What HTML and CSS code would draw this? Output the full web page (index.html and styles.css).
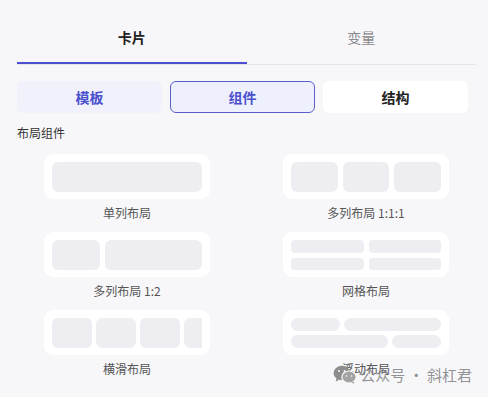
FILE: index.html
```html
<!DOCTYPE html>
<html lang="zh-CN">
<head>
  <meta charset="UTF-8">
  <meta name="viewport" content="width=device-width, initial-scale=1.0">
  <title>布局组件</title>
  <link rel="stylesheet" href="styles.css">
</head>
<body>
  <div class="panel">
    <div class="tabs">
      <div class="tab active">卡片</div>
      <div class="tab">变量</div>
    </div>

    <div class="segments">
      <div class="segment soft">模板</div>
      <div class="segment selected">组件</div>
      <div class="segment plain">结构</div>
    </div>

    <div class="section-title">布局组件</div>

    <div class="layout-grid">
      <div class="layout-item">
        <div class="card">
          <div class="row">
            <div class="cell grow1"></div>
          </div>
        </div>
        <div class="layout-name">单列布局</div>
      </div>

      <div class="layout-item">
        <div class="card">
          <div class="row">
            <div class="cell grow1"></div>
            <div class="cell grow1"></div>
            <div class="cell grow1"></div>
          </div>
        </div>
        <div class="layout-name">多列布局 1:1:1</div>
      </div>

      <div class="layout-item">
        <div class="card">
          <div class="row">
            <div class="cell grow1"></div>
            <div class="cell grow2"></div>
          </div>
        </div>
        <div class="layout-name">多列布局 1:2</div>
      </div>

      <div class="layout-item">
        <div class="card">
          <div class="grid4">
            <div class="cell small"></div>
            <div class="cell small"></div>
            <div class="cell small"></div>
            <div class="cell small"></div>
          </div>
        </div>
        <div class="layout-name">网格布局</div>
      </div>

      <div class="layout-item">
        <div class="card">
          <div class="scroll-row">
            <div class="cell fixed"></div>
            <div class="cell fixed"></div>
            <div class="cell fixed"></div>
            <div class="cell fixed"></div>
          </div>
        </div>
        <div class="layout-name">横滑布局</div>
      </div>

      <div class="layout-item">
        <div class="card">
          <div class="flow">
            <div class="flow-line">
              <div class="cell pill grow1"></div>
              <div class="cell pill grow2"></div>
            </div>
            <div class="flow-line">
              <div class="cell pill grow2"></div>
              <div class="cell pill grow1"></div>
            </div>
          </div>
        </div>
        <div class="layout-name">浮动布局</div>
      </div>
    </div>
  </div>

  <!-- 水印 -->
  <div class="watermark">
    <svg class="wm-icon" width="24" height="19" viewBox="0 0 24 19">
      <ellipse cx="9" cy="8" rx="8.5" ry="7.2" fill="#8d8d8d"/>
      <path d="M3.5 13 L2.8 16.5 L7 14.2 Z" fill="#8d8d8d"/>
      <ellipse cx="16" cy="12" rx="7.2" ry="6" fill="#a3a3a3" stroke="#f7f7f9" stroke-width="1.2"/>
      <path d="M20.5 16.5 L21.5 18.8 L18 17.4 Z" fill="#a3a3a3"/>
      <circle cx="6" cy="6" r="1" fill="#f7f7f9"/>
      <circle cx="11.5" cy="6" r="1" fill="#f7f7f9"/>
      <circle cx="13.5" cy="11" r="0.8" fill="#f7f7f9"/>
      <circle cx="18.5" cy="11" r="0.8" fill="#f7f7f9"/>
    </svg>
    <span>公众号 · 斜杠君</span>
  </div>
</body>
</html>
```

FILE: styles.css
```css
body {
  margin: 0;
  background-color: #f7f7f9;
  color: #333333;
  font-family: "Noto Sans CJK SC", "Noto Sans", sans-serif;
}

.panel {
  padding: 10px 12px 0 17px;
}

.tabs {
  display: flex;
  border-bottom: 1px solid #e4e4ea;
}

.tab {
  flex: 1;
  text-align: center;
  padding: 17px 0 15px;
  line-height: 20px;
  font-size: 14px;
  color: #8a8a8f;
  border-bottom: 2px solid transparent;
}

.tab.active {
  color: #222222;
  font-weight: bold;
  border-bottom-color: #4b50cf;
}

.segments {
  display: grid;
  grid-template-columns: repeat(3, 1fr);
  gap: 8px;
  margin: 16px 8px 0 0;
}

.segment {
  height: 32px;
  line-height: 32px;
  box-sizing: border-box;
  text-align: center;
  font-size: 14px;
  font-weight: bold;
  border-radius: 6px;
}

.segment.soft {
  background-color: #f0f1fb;
  color: #4b50cf;
}

.segment.selected {
  background-color: #eef0fd;
  border: 1px solid #5a5ec8;
  line-height: 30px;
  color: #4b50cf;
}

.segment.plain {
  background-color: #ffffff;
  color: #222222;
}

.section-title {
  margin-top: 10px;
  font-size: 12px;
  line-height: 20px;
  color: #333333;
}

.layout-grid {
  display: grid;
  grid-template-columns: 1fr 1fr;
  column-gap: 19px;
  row-gap: 9px;
  margin-top: 11px;
}

.layout-item {
  display: flex;
  flex-direction: column;
  align-items: center;
}

.card {
  width: 166px;
  height: 45px;
  box-sizing: border-box;
  padding: 8px;
  background-color: #ffffff;
  border-radius: 9px;
}

.layout-name {
  margin-top: 4px;
  font-size: 12px;
  line-height: 20px;
  color: #555555;
}

.cell {
  background-color: #eeeef2;
  border-radius: 6px;
}

.row {
  display: flex;
  gap: 5px;
  height: 30px;
}

.grow1 {
  flex: 1;
}

.grow2 {
  flex: 2;
}

.grid4 {
  display: grid;
  grid-template-columns: 1fr 1fr;
  grid-template-rows: 1fr 1fr;
  gap: 5px;
  height: 30px;
}

.cell.small {
  border-radius: 4px;
}

.scroll-row {
  display: flex;
  gap: 4px;
  height: 30px;
  overflow: hidden;
}

.cell.fixed {
  flex: 0 0 40px;
}

.flow {
  display: flex;
  flex-direction: column;
  gap: 4px;
  height: 30px;
}

.flow-line {
  display: flex;
  gap: 4px;
  flex: 1;
}

.cell.pill {
  border-radius: 7px;
}

.watermark {
  position: absolute;
  right: 16px;
  bottom: 12px;
  display: flex;
  align-items: center;
  gap: 3px;
  font-size: 15px;
  color: rgba(128, 128, 132, 0.85);
}
```
